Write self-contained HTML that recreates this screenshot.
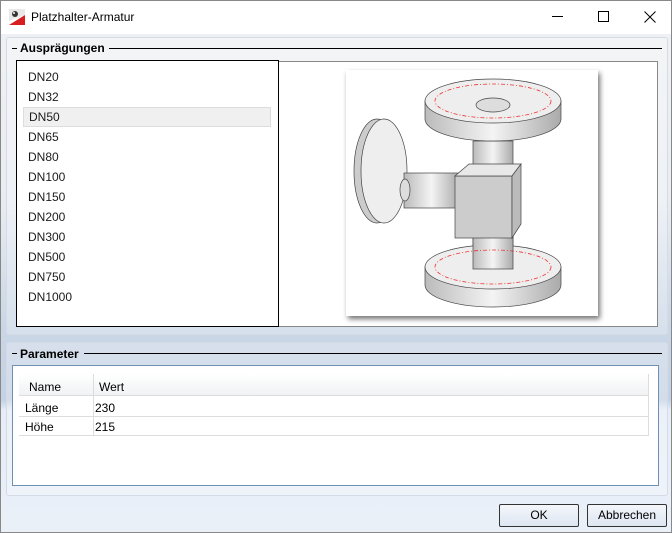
<!DOCTYPE html>
<html><head><meta charset="utf-8"><style>
*{box-sizing:border-box;margin:0;padding:0}
body{width:672px;height:533px;overflow:hidden;font-family:"Liberation Sans",sans-serif;font-size:12px;color:#000;position:relative;background:linear-gradient(#f0f1f3 0px,#e9edf2 200px,#c9d6e6 330px,#c4d2e3 400px,#e6edf7 410px,#eaf0f8 533px);border:1px solid #888}
.title{position:absolute;left:0;top:0;width:670px;height:33px;background:#fff}
.title span{position:absolute;left:30px;top:9px;font-size:12px}
.grp{position:absolute;border:1px solid #d3dbe6;border-radius:3px;background:rgba(255,255,255,0.25)}
.gl{position:absolute;font-weight:bold;font-size:12px;background:transparent}
.line{position:absolute;height:1px;background:#000}
.list{position:absolute;left:15px;top:59px;width:263px;height:267px;background:#fff;border:1px solid #000}
.list div{height:20px;line-height:20px;padding-left:11px;font-size:12px;color:#1b1b1b}
.sel{background:#f0f0f0;border:1px solid #ddd;margin:0 7px 0 6px;padding-left:5px!important;line-height:18px!important}
.btn{position:absolute;top:503px;height:23px;border:1px solid #333;border-radius:2px;background:linear-gradient(#f4f6fa,#dde6f2);text-align:center;line-height:21px;font-size:12px}
</style></head><body>
<div class="title">
<svg style="position:absolute;left:8px;top:8px" width="16" height="16"><rect width="16" height="16" fill="#fff"/><path d="M0 16L16 6V16Z" fill="#d81e1e"/><path d="M0 0H16V6L0 12Z" fill="#e8e8e8"/><circle cx="6" cy="5" r="3" fill="#333"/><circle cx="5" cy="4" r="1" fill="#fff"/></svg>
<span>Platzhalter-Armatur</span>
<div style="position:absolute;left:551px;top:15px;width:11px;height:1px;background:#000"></div>
<div style="position:absolute;left:597px;top:10px;width:11px;height:11px;border:1px solid #000"></div>
<svg style="position:absolute;left:643px;top:10px" width="12" height="12"><path d="M0.5 0.5L11.5 11.5M11.5 0.5L0.5 11.5" stroke="#000"/></svg>
</div>
<div class="grp" style="left:5px;top:36px;width:662px;height:298px"></div>
<div class="line" style="left:11px;top:47px;width:5px"></div>
<div class="gl" style="left:19px;top:40px">Ausprägungen</div>
<div class="line" style="left:108px;top:47px;width:553px"></div>
<div style="position:absolute;left:278px;top:60px;width:379px;height:266px;background:#fff;border:1px solid #888;border-left:none"></div>
<div class="list">
<div style="margin-top:6px">DN20</div><div>DN32</div><div class="sel">DN50</div><div>DN65</div><div>DN80</div><div>DN100</div><div>DN150</div><div>DN200</div><div>DN300</div><div>DN500</div><div>DN750</div><div>DN1000</div>
</div>
<div style="position:absolute;left:345px;top:69px;width:252px;height:246px;background:#fff;box-shadow:2px 3px 5px rgba(0,0,0,0.55)"></div>
<svg style="position:absolute;left:345px;top:69px" width="252" height="246" viewBox="345 69 252 246">
<defs><linearGradient id="g" x1="0" x2="1"><stop offset="0" stop-color="#bbb"/><stop offset=".5" stop-color="#f4f4f4"/><stop offset="1" stop-color="#aaa"/></linearGradient></defs>
<g stroke="#444" stroke-width=".7">
<rect x="472" y="140" width="40" height="125" fill="url(#g)"/>
<path d="M424 100 v18 a68 22 0 0 0 136 0 v-18z" fill="url(#g)"/>
<ellipse cx="492" cy="100" rx="68" ry="22" fill="#eee"/>
<ellipse cx="492" cy="104" rx="17" ry="7" fill="#ddd"/>
<path d="M424 266 v18 a68 22 0 0 0 136 0 v-18z" fill="url(#g)"/>
<ellipse cx="492" cy="266" rx="68" ry="22" fill="#eee"/>
<rect x="472" y="235" width="40" height="33" fill="url(#g)"/>
<ellipse cx="376" cy="170" rx="23" ry="52" fill="#ccc"/>
<ellipse cx="383" cy="170" rx="23" ry="52" fill="#eee"/>
<rect x="403" y="172" width="55" height="35" fill="url(#g)"/>
<ellipse cx="404" cy="189" rx="5" ry="11" fill="#ddd"/>
<rect x="454" y="175" width="57" height="62" fill="#ccc"/>
<path d="M454 175 l14-12 h52 l-9 12z" fill="#e8e8e8"/>
<path d="M511 175 l9-12 v60 l-9 14z" fill="#bbb"/>
</g>
<g stroke="#e33" stroke-width=".8" stroke-dasharray="4 2 1 2" fill="none">
<ellipse cx="492" cy="100" rx="58" ry="17"/>
<ellipse cx="492" cy="266" rx="58" ry="17"/>
</g>
</svg>
<div class="grp" style="left:5px;top:341px;width:662px;height:154px"></div>
<div class="line" style="left:11px;top:352px;width:5px"></div>
<div class="gl" style="left:19px;top:346px">Parameter</div>
<div class="line" style="left:83px;top:352px;width:578px"></div>
<div style="position:absolute;left:11px;top:364px;width:647px;height:121px;background:#fff;border:1px solid #6f8fb5"></div>
<div style="position:absolute;left:18px;top:373px;width:630px;height:22px;background:linear-gradient(#fff,#f1f2f4);border-bottom:1px solid #ddd"></div>
<div style="position:absolute;left:92px;top:373px;width:1px;height:62px;background:#ddd"></div>
<div style="position:absolute;left:28px;top:379px">Name</div>
<div style="position:absolute;left:98px;top:379px">Wert</div>
<div style="position:absolute;left:18px;top:415px;width:630px;height:1px;background:#ddd"></div>
<div style="position:absolute;left:18px;top:434px;width:630px;height:1px;background:#ddd"></div>
<div style="position:absolute;left:647px;top:373px;width:1px;height:62px;background:#ddd"></div>
<div style="position:absolute;left:24px;top:400px">Länge</div><div style="position:absolute;left:94px;top:400px">230</div>
<div style="position:absolute;left:24px;top:419px">Höhe</div><div style="position:absolute;left:94px;top:419px">215</div>
<div class="btn" style="left:498px;width:80px">OK</div>
<div class="btn" style="left:586px;width:80px">Abbrechen</div>
</body></html>
